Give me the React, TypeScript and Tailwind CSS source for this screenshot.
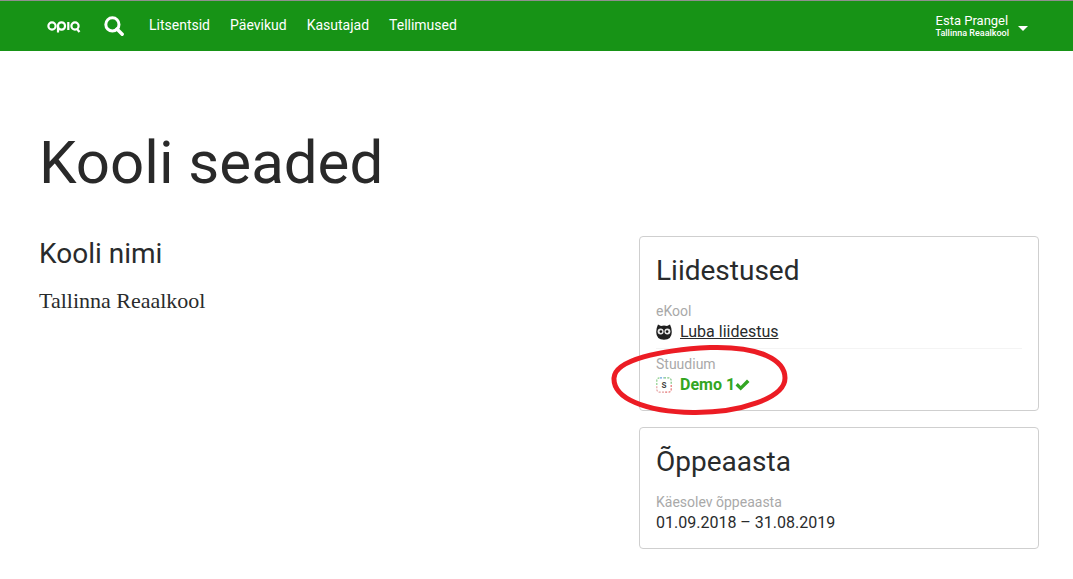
import React from "react";

const Logo = () => (
  <svg width="34" height="14" viewBox="0 0 34 14" fill="none" stroke="#fff" strokeWidth="2.2">
    <circle cx="5" cy="7" r="3.6" />
    <rect x="11" y="3.4" width="7" height="7.2" rx="3.4" />
    <path d="M11 7v6.5" />
    <path d="M21.3 3v8" />
    <circle cx="28" cy="7" r="3.6" />
    <path d="M30 10l2.5 3" />
  </svg>
);

const Search = () => (
  <svg width="20" height="20" viewBox="0 0 20 20" fill="none" stroke="#fff">
    <circle cx="8.4" cy="8.4" r="6.6" strokeWidth="3" />
    <path d="M13 13l5.2 5.2" strokeWidth="3.4" strokeLinecap="round" />
  </svg>
);

const Owl = () => (
  <svg width="16" height="16" viewBox="0 0 16 16">
    <path d="M2 .5L5 2Q8 1.2 11 2L14 .5Q15.8 4 15.8 8Q15.8 15.6 8 15.8Q.2 15.6 .2 8Q.2 4 2 .5Z" fill="#1f1f1f" />
    <circle cx="4.6" cy="7.6" r="3" fill="#e6e6e6" />
    <circle cx="11.4" cy="7.6" r="3" fill="#e6e6e6" />
    <circle cx="4.9" cy="7.6" r="1.3" fill="#111" />
    <circle cx="11.1" cy="7.6" r="1.3" fill="#111" />
  </svg>
);

const Stuudium = () => (
  <svg width="16" height="16" viewBox="0 0 16 16" fill="none" strokeWidth="1.2" strokeDasharray="2 1.3">
    <path d="M4 .8H8" stroke="#6aa5e0" />
    <path d="M8 .8H12Q15.2.8 15.2 4V8" stroke="#7bc47f" />
    <path d="M15.2 8V12Q15.2 15.2 12 15.2H8" stroke="#e57373" />
    <path d="M8 15.2H4Q.8 15.2.8 12V8" stroke="#e5a0a0" />
    <path d="M.8 8V4Q.8.8 4 .8" stroke="#8ccf8c" />
    <text x="8" y="11.2" textAnchor="middle" fontSize="10" fontFamily="Roboto, sans-serif" fill="#444" stroke="none" fontWeight="500">s</text>
  </svg>
);

const Check = () => (
  <svg width="15" height="12" viewBox="0 0 15 12" fill="#33a622">
    <path d="M.5 6.4L2.8 4.1L5.7 6.9L12 .6L14.5 3L5.7 11.6Z" />
  </svg>
);

export default function App() {
  return (
    <div className="relative h-[579px] w-[1073px] overflow-hidden bg-white font-['Roboto',sans-serif] text-[#292b2c]">
      <nav className="flex h-[51px] items-center border-t border-t-[#8f8f8f] bg-[#179316] pl-[47px] pr-[45px] text-white">
        <Logo />
        <span className="ml-[23px] flex"><Search /></span>
        <div className="ml-[25px] mb-[2px] flex gap-5 text-sm">
          <span>Litsentsid</span>
          <span>Päevikud</span>
          <span>Kasutajad</span>
          <span>Tellimused</span>
        </div>
        <div className="ml-auto flex items-center">
          <div className="flex flex-col">
            <span className="text-[13px] leading-[15px]">Esta Prangel</span>
            <span className="text-[9px] font-medium leading-[11px]">Tallinna Reaalkool</span>
          </div>
          <span className="ml-[9px] mt-1 h-0 w-0 border-x-[5px] border-t-[5px] border-x-transparent border-t-white" />
        </div>
      </nav>

      <main className="px-[40px]">
        <h1 className="ml-[-1px] mt-[73px] text-[60px] leading-[77px] text-[#292929]">Kooli seaded</h1>
        <div className="mt-[35px] flex justify-between">
          <section className="ml-[-1px] pt-[1px]">
            <h2 className="text-[28px] leading-[34px]">Kooli nimi</h2>
            <p className="mt-[17px] font-['Liberation_Serif',serif] text-[22px] leading-[26px]">Tallinna Reaalkool</p>
          </section>
          <aside className="mr-[-6px] flex w-[400px] flex-col gap-4">
            <div className="h-[175px] rounded border border-[#cfcfcf] px-4 pt-[17px]">
              <h3 className="text-[28px] leading-[34px]">Liidestused</h3>
              <div className="mt-[15px] border-b border-[#f4f4f4] pb-[7px]">
                <div className="text-sm leading-[17px] text-[#a9a9a9]">eKool</div>
                <div className="mt-[2px] flex items-center gap-2 leading-[19px]">
                  <Owl />
                  <a className="underline">Luba liidestus</a>
                </div>
              </div>
              <div className="mt-[7px]">
                <div className="text-sm leading-[17px] text-[#a9a9a9]">Stuudium</div>
                <div className="mt-[2px] flex items-center gap-2 leading-[19px]">
                  <Stuudium />
                  <span className="flex items-center font-bold text-[#33a622]">Demo 1<Check /></span>
                </div>
              </div>
            </div>
            <div className="h-[122px] rounded border border-[#cfcfcf] px-4 pt-[17px]">
              <h3 className="text-[28px] leading-[34px]">Õppeaasta</h3>
              <div className="mt-[15px] text-sm leading-[17px] text-[#a9a9a9]">Käesolev õppeaasta</div>
              <div className="mt-[2px] leading-[20px]">01.09.2018 – 31.08.2019</div>
            </div>
          </aside>
        </div>
      </main>

      <svg className="absolute left-[610px] top-[340px]" width="180" height="76" viewBox="0 0 180 76" fill="none">
        <path d="M4 38C5 20 50 10 100 7.500C150 6 175 20 175 38C175 58 130 73 83 72.500C35 72 3 58 4 38Z" stroke="#ec1c24" strokeWidth="5" />
      </svg>
    </div>
  );
}
